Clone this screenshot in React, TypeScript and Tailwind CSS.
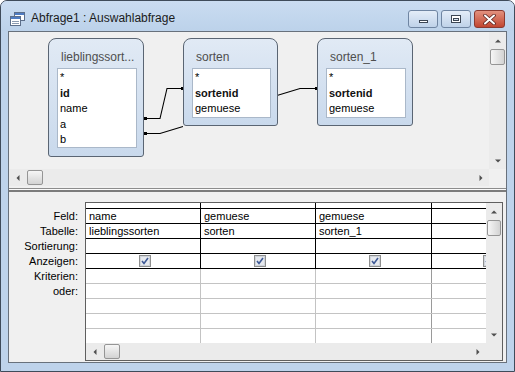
import React from 'react';

type Dir = 'up' | 'down' | 'left' | 'right';

const Arrow: React.FC<{ dir: Dir }> = ({ dir }) => {
  const pts = {
    up: '1,5.5 4,2.5 7,5.5',
    down: '1,2.5 4,5.5 7,2.5',
    left: '5.5,1 2.5,4 5.5,7',
    right: '2.5,1 5.5,4 2.5,7',
  }[dir];
  return (
    <svg width="8" height="8" viewBox="0 0 8 8">
      <polygon points={pts} fill="#4f4f4f" />
    </svg>
  );
};

const VScroll: React.FC<{ className?: string }> = ({ className }) => (
  <div className={`flex flex-col shrink-0 bg-[#ebebeb] ${className ?? ''}`}>
    <div className="h-[17px] flex items-center justify-center"><Arrow dir="up" /></div>
    <div className="h-[16px] mx-[1px] rounded-[2px] border border-[#959595] bg-linear-to-r from-[#f6f6f6] to-[#d3d3d3]" />
    <div className="flex-1" />
    <div className="h-[17px] flex items-center justify-center"><Arrow dir="down" /></div>
  </div>
);

const HScroll: React.FC<{ className?: string }> = ({ className }) => (
  <div className={`flex h-[17px] min-w-0 bg-[#ebebeb] ${className ?? ''}`}>
    <div className="w-[17px] flex items-center justify-center"><Arrow dir="left" /></div>
    <div className="w-[16px] my-[1px] ml-[1px] rounded-[2px] border border-[#959595] bg-linear-to-b from-[#f6f6f6] to-[#d3d3d3]" />
    <div className="flex-1" />
    <div className="w-[17px] flex items-center justify-center"><Arrow dir="right" /></div>
  </div>
);

interface Field {
  name: string;
  bold?: boolean;
}

const TableBox: React.FC<{ title: string; fields: Field[]; className: string; listH: string }> = ({
  title,
  fields,
  className,
  listH,
}) => (
  <div
    className={`absolute flex flex-col border border-[#5a6573] rounded-t-[8px] rounded-b-[3px] bg-linear-to-b from-[#e1eaf5] to-[#c9d9ec] ${className}`}
  >
    <div className="h-[29px] pt-[11px] pl-[12px] text-[12px] leading-[14px] text-[#4e4e4e] whitespace-nowrap">
      {title}
    </div>
    <div className={`ml-[8px] mr-[6px] border border-[#aab8c9] bg-white pt-[1px] ${listH}`}>
      {fields.map((f) => (
        <div
          key={f.name}
          className={`pl-[2px] text-[11px] leading-[15.5px] ${f.bold ? 'font-bold text-[#111]' : 'text-black'}`}
        >
          {f.name}
        </div>
      ))}
    </div>
  </div>
);

const Check: React.FC = () => (
  <svg width="12" height="12" viewBox="0 0 12 12" className="shrink-0">
    <rect x="0.5" y="0.5" width="11" height="11" fill="#f4f4f4" stroke="#8e8f8f" />
    <rect x="1.5" y="1.5" width="9" height="9" fill="#e6e9ee" stroke="#d0d4da" />
    <path d="M3 6 L5 8.5 L9 3" fill="none" stroke="#3f5a96" strokeWidth="1.6" />
  </svg>
);

interface GridRow {
  label: string;
  cells: string[];
  check?: boolean;
  dark: boolean;
}

const rows: GridRow[] = [
  { label: 'Feld:', cells: ['name', 'gemuese', 'gemuese', ''], dark: true },
  { label: 'Tabelle:', cells: ['lieblingssorten', 'sorten', 'sorten_1', ''], dark: true },
  { label: 'Sortierung:', cells: ['', '', '', ''], dark: true },
  { label: 'Anzeigen:', cells: ['', '', '', ''], check: true, dark: true },
  { label: 'Kriterien:', cells: ['', '', '', ''], dark: false },
  { label: 'oder:', cells: ['', '', '', ''], dark: false },
  { label: '', cells: ['', '', '', ''], dark: false },
  { label: '', cells: ['', '', '', ''], dark: false },
];

const colW = ['w-[115px]', 'w-[115px]', 'w-[116px]'];

const CaptionButtons: React.FC = () => (
  <div className="flex gap-[3px] mt-[9px]">
    <div className="w-[30px] h-[18px] rounded-[3px] border border-[#6f85a2] bg-linear-to-b from-[#e4edf8] to-[#bfd2e9] flex items-end justify-center pb-[4px]">
      <div className="w-[9px] h-[3px] bg-white border border-[#3c4654]" />
    </div>
    <div className="w-[30px] h-[18px] rounded-[3px] border border-[#6f85a2] bg-linear-to-b from-[#e4edf8] to-[#bfd2e9] flex items-center justify-center">
      <div className="w-[10px] h-[8px] border border-[#3c4654] bg-white flex items-center justify-center">
        <div className="w-[6px] h-[3px] border border-[#3c4654] bg-[#d6e2f0]" />
      </div>
    </div>
    <div className="w-[31px] h-[18px] rounded-[3px] border border-[#8b3a30] bg-linear-to-b from-[#e2917f] to-[#c14530] flex items-center justify-center">
      <svg width="13" height="11" viewBox="0 0 13 11">
        <path d="M2 1.5 L11 9.5 M11 1.5 L2 9.5" stroke="#5a2420" strokeWidth="3.6" strokeLinecap="round" />
        <path d="M2 1.5 L11 9.5 M11 1.5 L2 9.5" stroke="#ffffff" strokeWidth="2" strokeLinecap="round" />
      </svg>
    </div>
  </div>
);

const QueryIcon: React.FC = () => (
  <svg width="15" height="14" viewBox="0 0 15 14">
    <rect x="4.5" y="0.5" width="10" height="8" fill="#fff" stroke="#5d6f8a" />
    <rect x="5" y="1" width="9" height="2" fill="#4f7cc2" />
    <rect x="0.5" y="4.5" width="10" height="9" fill="#fff" stroke="#5d6f8a" />
    <rect x="1" y="5" width="9" height="2" fill="#4f7cc2" />
    <path d="M2 9.5 H9 M2 11.5 H9" stroke="#8a9ab0" />
  </svg>
);

export default function App() {
  return (
    <div className="w-[515px] h-[372px] flex flex-col border border-[#3f4b5a] rounded-t-[7px] bg-[#bed3eb] overflow-hidden font-['Liberation_Sans',Arial,sans-serif]">
      {/* title bar */}
      <div className="h-[30px] flex items-start pl-[9px] pr-[9px] bg-linear-to-b from-[#cadcf1] to-[#bcd2ea]">
        <div className="mt-[11px]"><QueryIcon /></div>
        <div className="ml-[6px] mt-[10px] text-[12px] leading-[15px] text-[#1b1b1b]">Abfrage1 : Auswahlabfrage</div>
        <div className="flex-1" />
        <CaptionButtons />
      </div>

      {/* client */}
      <div className="flex-1 flex min-w-0 px-[7px] pb-[8px]">
        <div className="flex-1 min-w-0 flex flex-col border border-[#68717c] bg-[#f0f0f0]">
          {/* upper pane: table diagram */}
          <div className="h-[154px] flex flex-col">
            <div className="flex h-[137px]">
              <div className="relative flex-1 min-w-0 overflow-hidden bg-[#f0f0f0]">
                <svg className="absolute left-0 top-0" width="479" height="137">
                  <g fill="none" stroke="#000" strokeWidth="1.1">
                    <path d="M134 86.5 H151 L158 56.5 H174" />
                    <path d="M134 101.5 H151 L174 94.5" />
                    <path d="M268 63.5 L291 56.5 H308" />
                  </g>
                  <g fill="#000">
                    <rect x="135" y="85" width="3" height="3" />
                    <rect x="135" y="100" width="3" height="3" />
                    <rect x="172" y="55" width="3" height="3" />
                    <rect x="306" y="55" width="3" height="3" />
                  </g>
                </svg>
                <TableBox
                  className="left-[39px] top-[6px] w-[96px] h-[119px]"
                  listH="h-[80px]"
                  title="lieblingssort..."
                  fields={[{ name: '*' }, { name: 'id', bold: true }, { name: 'name' }, { name: 'a' }, { name: 'b' }]}
                />
                <TableBox
                  className="left-[174px] top-[6px] w-[95px] h-[88px]"
                  listH="h-[50px]"
                  title="sorten"
                  fields={[{ name: '*' }, { name: 'sortenid', bold: true }, { name: 'gemuese' }]}
                />
                <TableBox
                  className="left-[308px] top-[6px] w-[96px] h-[88px]"
                  listH="h-[50px]"
                  title="sorten_1"
                  fields={[{ name: '*' }, { name: 'sortenid', bold: true }, { name: 'gemuese' }]}
                />
              </div>
              <VScroll className="w-[17px]" />
            </div>
            <div className="flex">
              <HScroll className="flex-1" />
              <div className="w-[17px] shrink-0 bg-[#f0f0f0]" />
            </div>
          </div>

          {/* splitter */}
          <div className="h-[9px] flex flex-col">
            <div className="h-[2px]" />
            <div className="h-[1px] bg-[#8c8c8c]" />
            <div className="h-[1px] bg-[#fafafa]" />
            <div className="h-[2px] bg-[#7c7c7c]" />
            <div className="flex-1 bg-[#f0f0f0]" />
          </div>

          {/* lower pane: design grid */}
          <div className="flex-1 flex min-w-0 pr-[3px]">
            <div className="w-[76px] shrink-0 pt-[14px] flex flex-col">
              {rows.map((r, i) => (
                <div key={i} className="h-[15px] pr-[7px] text-right text-[11px] leading-[15px] text-black">
                  {r.label}
                </div>
              ))}
            </div>
            <div className="flex-1 min-w-0 flex flex-col mt-[7px] mb-[1px] border border-[#5f5f5f] bg-white">
              <div className="flex-1 flex min-w-0">
                <div className="flex-1 min-w-0 flex flex-col overflow-hidden">
                  {/* column selector row */}
                  <div className="flex h-[6px] border-b border-black">
                    {colW.map((w) => (
                      <div key={w + 's'} className={`${w} shrink-0 border-r border-black`} />
                    ))}
                    <div className="flex-1" />
                  </div>
                  {rows.map((r, i) => {
                    const line = r.dark ? 'border-black' : 'border-[#c3c3c3]';
                    return (
                      <div key={i} className={`flex h-[15px] border-b ${line}`}>
                        {colW.map((w, c) => (
                          <div
                            key={c}
                            className={`${w} shrink-0 border-r ${
                              !r.dark && c === 2 ? 'border-[#9a9a9a]' : line
                            } pl-[3px] text-[11px] leading-[14px] text-black whitespace-nowrap flex items-center ${
                              r.check ? 'justify-center' : ''
                            }`}
                          >
                            {r.check ? <Check /> : r.cells[c]}
                          </div>
                        ))}
                        <div className="flex-1 min-w-0 overflow-hidden">
                          {r.check && (
                            <div className="w-[114px] h-full flex items-center justify-center">
                              <Check />
                            </div>
                          )}
                        </div>
                      </div>
                    );
                  })}
                  <div className="flex flex-1">
                    {colW.map((w, c) => (
                      <div
                        key={c}
                        className={`${w} shrink-0 border-r ${c === 2 ? 'border-[#9a9a9a]' : 'border-[#c3c3c3]'}`}
                      />
                    ))}
                    <div className="flex-1" />
                  </div>
                </div>
                <VScroll className="w-[16px]" />
              </div>
              <div className="flex min-w-0">
                <HScroll className="flex-1" />
                <div className="w-[16px] shrink-0 bg-[#ebebeb]" />
              </div>
            </div>
          </div>
        </div>
      </div>
    </div>
  );
}
